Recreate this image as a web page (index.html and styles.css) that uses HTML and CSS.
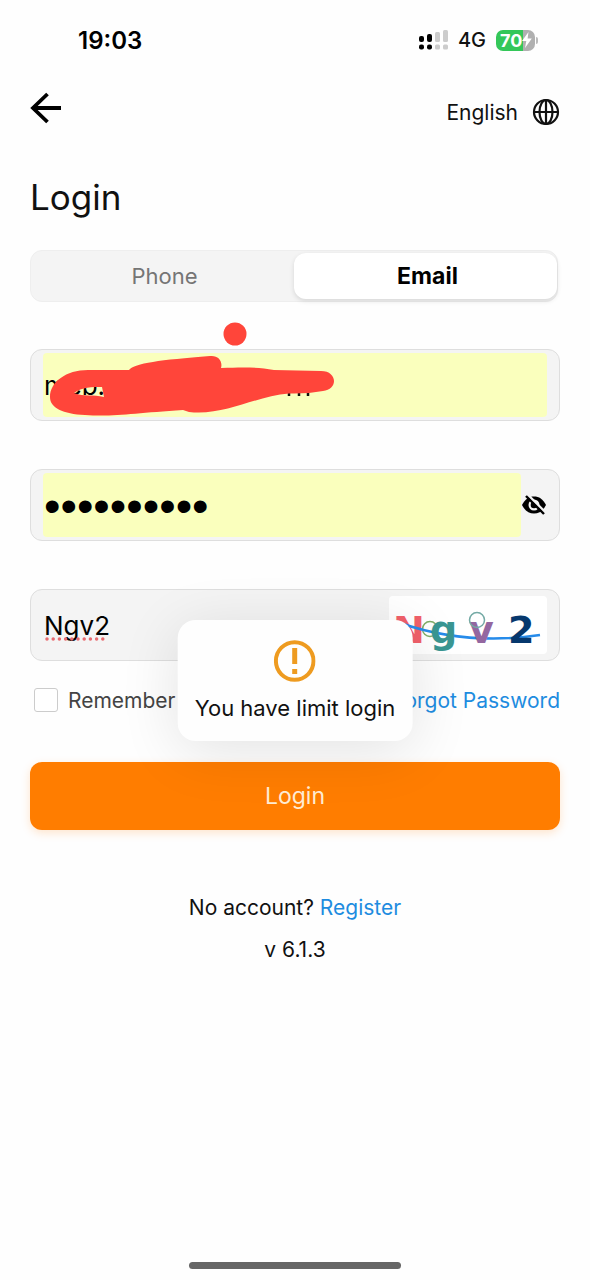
FILE: index.html
```html
<!DOCTYPE html>
<html lang="en">
<head>
<meta charset="utf-8">
<meta name="viewport" content="width=device-width, initial-scale=1">
<title>Login</title>
<link rel="stylesheet" href="styles.css">
</head>
<body>
<div class="screen">
  <div class="status">
    <time class="clock">19:03</time>
    <div class="status-right">
      <svg class="signal" viewBox="0 0 31 22" aria-hidden="true">
        <g fill="#000"><rect x="1" y="7" width="5" height="6" rx="2"/><rect x="9" y="5" width="5" height="8" rx="2"/><rect x="1" y="15.500" width="5" height="5" rx="2"/><rect x="9" y="15.500" width="5" height="5" rx="2"/></g>
        <g fill="#ccc"><rect x="17" y="3" width="5" height="10" rx="1.5"/><rect x="25" y="1" width="5" height="12" rx="1.5"/><rect x="17" y="15.500" width="5" height="5" rx="1.500"/><rect x="25" y="15.500" width="5" height="5" rx="1.500"/></g>
      </svg>
      <span class="network">4G</span>
      <span class="battery">
        <span class="battery-level">70</span>
        <svg class="bolt" viewBox="0 0 10 16" aria-hidden="true"><path d="M6.500 0 0 9h4.300L3 16l6.800-9.500H5.600z" fill="#fff"/></svg>
      </span>
      <span class="battery-cap"></span>
    </div>
  </div>

  <header class="nav">
    <button class="icon-button" type="button" aria-label="Back">
      <svg class="back-icon" viewBox="0 0 32 32" aria-hidden="true"><path d="M17.500 2 3 16l14.500 14M3 16h28" fill="none" stroke="#000" stroke-width="3.800"/></svg>
    </button>
    <button class="language" type="button">English
      <svg class="globe" viewBox="0 0 28 28" aria-hidden="true"><g fill="none" stroke="#111" stroke-width="2.200"><circle cx="14" cy="14" r="12"/><ellipse cx="14" cy="14" rx="6.500" ry="12"/><path d="M2 14h24M14 2v24"/></g></svg>
    </button>
  </header>

  <main class="content">
    <h1 class="title">Login</h1>
    <div class="tabs" role="tablist">
      <button class="tab" type="button" role="tab" aria-selected="false">Phone</button>
      <button class="tab tab-active" type="button" role="tab" aria-selected="true">Email</button>
    </div>

    <form class="form">
      <div class="field">
        <input class="input input-filled" type="text" aria-label="Email" value="mcb.">
        <svg class="scribble" viewBox="0 0 290 100" aria-hidden="true">
          <path d="M244 73v3M254 73v3M263 73v3" stroke="#111" stroke-width="2.500"/>
          <g fill="#ff453a"><circle cx="190" cy="14" r="11.500"/>
          <path fill-rule="evenodd" d="M5 77C5 62 21 50 43 50H84C90 43 115 40 165 36C173 35 178 41 176 48C199 47 213 47 229 50L276 51C293 51 293 70 278 71Q262 74 244 73.500C210 76 180 96 144 92L138 90C90 93 69 97 40 95C18 94 5 88 5 77ZM29 73C37 67 47 67 57 67L59 77C48 74 39 77 29 73Z"/></g>
        </svg>
      </div>
      <div class="field">
        <input class="input input-filled input-hidden" type="password" aria-label="Password" value="abcdefghij">
        <button class="icon-button" type="button" aria-label="Show password">
          <svg class="eye" viewBox="0 0 26 22" aria-hidden="true">
            <path d="M1 11C4 5 8 2.500 13 2.500s9 2.500 12 8.500c-3 6-7 8.500-12 8.500S4 17 1 11z"/><circle cx="13" cy="11" r="5.500" fill="#f4f4f4"/><circle cx="13" cy="11" r="3.300"/><path d="M6 0l19 19" stroke="#f4f4f4" stroke-width="2.500"/><path d="M5 2l18 18" stroke="#000" stroke-width="2.400"/>
          </svg>
        </button>
      </div>
      <div class="field">
        <span class="code-wrap"><input class="input" type="text" aria-label="Verification code" value="Ngv2" spellcheck="false"><svg class="spelling" viewBox="0 0 62 4" aria-hidden="true"><path d="M3 2h59" stroke="#e96b70" stroke-width="3.500" stroke-linecap="round" stroke-dasharray="0 6.200"/></svg></span>
        <svg class="captcha" viewBox="0 0 158 58" role="img" aria-label="Captcha">
          <g class="captcha-text"><text x="4" y="47" fill="#f1606a">N</text></g>
          <g fill="none"><circle cx="41" cy="33" r="7.500" stroke="#7fad67" stroke-width="1.500"/><path d="M11 27Q78 50 151 39" stroke="#268bea" stroke-width="2.500"/></g>
          <g class="captcha-text"><text x="41" y="47" fill="#3a9692">g</text><text x="80" y="47" fill="#9467a0">v</text><text x="119" y="47" fill="#06386d">2</text></g>
          <circle cx="88" cy="24" r="7.500" fill="none" stroke="#74aaa5" stroke-width="1.500"/>
        </svg>
      </div>
      <div class="options">
        <label class="remember"><input class="checkbox" type="checkbox">Remember</label>
        <a class="link" href="#">Forgot Password</a>
      </div>
      <button class="submit" type="submit">Login</button>
      <div class="toast" role="alert">
        <svg class="warning" viewBox="0 0 42 42" aria-hidden="true"><circle cx="21" cy="21" r="18.800" fill="none" stroke="#ee9b20" stroke-width="4"/><path d="M18.500 8h5v16h-5zM18.500 29h5v5h-5z" fill="#ee9b20"/></svg>
        <span>You have limit login</span>
      </div>
    </form>
    <p class="note">No account? <a class="link" href="#">Register</a></p>
    <p class="note">v 6.1.3</p>
  </main>
  <div class="home-indicator"></div>
</div>
</body>
</html>
```
FILE: styles.css
```css
* { box-sizing: border-box; }
body {
  margin: 0;
  background: #fefefe;
  color: #111;
  font-family: Inter, "Liberation Sans", sans-serif;
  font-size: 22px;
}
button, input { font: inherit; color: inherit; }
button { border: 0; padding: 0; background: none; }
svg { display: block; }
.screen { min-height: 100vh; display: flex; flex-direction: column; }

.status {
  height: 80px;
  padding: 0 52px 0 78px;
  display: flex;
  align-items: center;
  justify-content: space-between;
}
.clock { font-size: 24px; font-weight: 600; color: #000; }
.status-right { display: flex; align-items: center; }
.signal { width: 31px; height: 22px; }
.network { margin-left: 9px; font-size: 20px; font-weight: 500; }
.battery {
  margin-left: 10px;
  width: 39px;
  height: 21px;
  border-radius: 7px;
  display: flex;
  align-items: center;
  background: linear-gradient(90deg, #34c759 70%, #b0b0b0 70%);
}
.battery-level { padding-left: 4px; color: #fff; font-size: 18px; font-weight: 700; }
.bolt { width: 10px; height: 16px; }
.battery-cap { width: 2px; height: 7px; margin-left: 1px; border-radius: 0 2px 2px 0; background: #bbb; }

.nav {
  padding: 12px 30px 0;
  display: flex;
  align-items: flex-start;
  justify-content: space-between;
}
.back-icon { width: 32px; height: 32px; }
.language { display: flex; align-items: center; gap: 14px; height: 40px; font-size: 21px; }
.globe { width: 28px; height: 28px; }

.content { flex: 1; padding: 0 30px; }
.title { margin: 42px 0 29px; font-size: 35px; line-height: 47px; font-weight: 400; }
.tabs {
  display: flex;
  height: 52px;
  margin-right: 2px;
  padding: 2px 0;
  border-radius: 12px;
  border: 1px solid #eee;
  background: #f4f4f4;
}
.tab { flex: 1; padding-left: 4px; border-radius: 12px; color: #757575; font-size: 22px; }
.tab-active { background: #fff; color: #000; font-size: 23px; font-weight: 700; box-shadow: 0 2px 5px rgba(0, 0, 0, .12); }

.form { position: relative; margin-top: 47px; }
.field {
  position: relative;
  display: flex;
  align-items: center;
  height: 72px;
  margin-bottom: 48px;
  padding: 3px 12px;
  border: 1px solid #dedede;
  border-radius: 12px;
  background: #f4f4f4;
}
.input {
  flex: 1;
  width: 100%;
  min-width: 0;
  height: 64px;
  padding: 0 1px;
  border: 0;
  border-radius: 4px;
  outline: 0;
  background: transparent;
  color: #000;
  font-size: 26px;
}
.input-filled { background: #faffbd; }
.input-hidden { font-family: "Liberation Sans", sans-serif; font-size: 47px; }
.eye { width: 26px; height: 22px; }
.scribble { position: absolute; left: 14px; top: -30px; width: 290px; height: 100px; }
.code-wrap { position: relative; flex: 1; }
.code-wrap .input { display: block; }
.spelling { position: absolute; left: 1px; bottom: 16px; width: 62px; height: 4px; }
.captcha { width: 158px; height: 58px; border-radius: 4px; background: #fff; }
.captcha-text { font: 700 38px "DejaVu Sans", sans-serif; }

.options {
  display: flex;
  align-items: center;
  justify-content: space-between;
  margin-top: -25px;
  height: 32px;
  font-size: 21px;
}
.remember { display: flex; align-items: center; gap: 10px; padding-left: 4px; color: #444; }
.checkbox { appearance: none; width: 24px; height: 24px; margin: 0; border: 1px solid #ccc; border-radius: 3px; background: #fff; }
.link { color: #1d8ce0; text-decoration: none; }
.submit {
  display: block;
  width: 100%;
  height: 68px;
  margin-top: 46px;
  border-radius: 12px;
  background: #ff7d00;
  color: #ffecd4;
  font-size: 23px;
  box-shadow: 0 3px 10px rgba(255, 125, 0, .2);
}
.toast {
  position: absolute;
  left: 50%;
  top: 271px;
  transform: translateX(-50%);
  display: flex;
  flex-direction: column;
  align-items: center;
  gap: 13px;
  padding: 20px 17px 19px;
  border-radius: 18px;
  background: #fefefe;
  box-shadow: 0 10px 60px rgba(0, 0, 0, .11);
  white-space: nowrap;
  line-height: 27px;
}
.warning { width: 42px; height: 42px; }
.note { margin: 0; text-align: center; font-size: 21px; line-height: 42px; }
.form + .note { margin-top: 57px; }
.home-indicator { width: 36%; height: 7px; margin: 0 auto 11px; border-radius: 4px; background: #666; }
```
